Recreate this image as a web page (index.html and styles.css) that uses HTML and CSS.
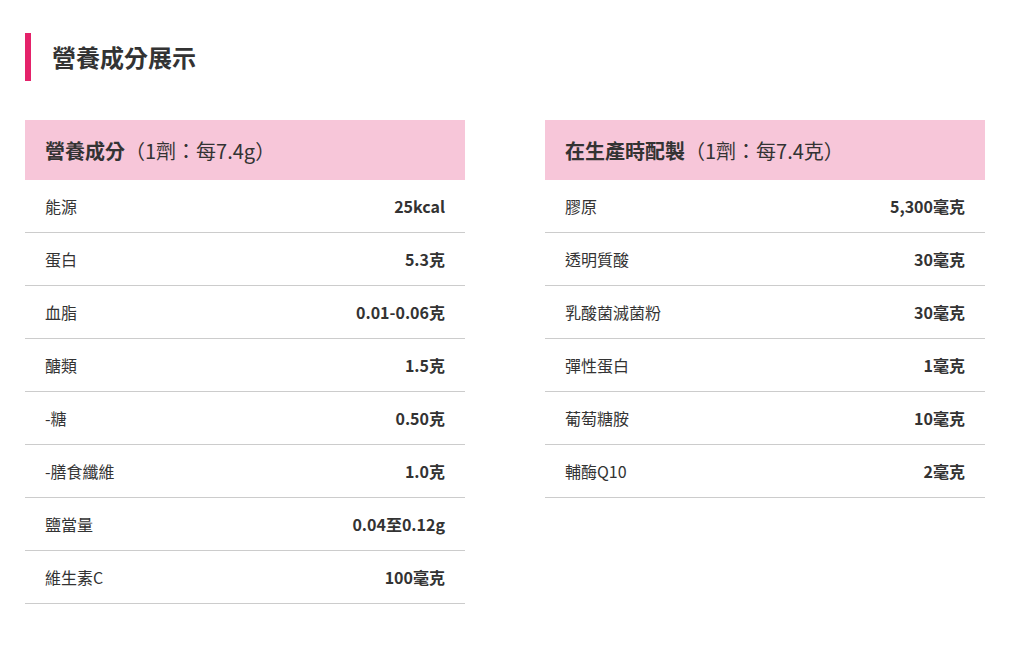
FILE: index.html
```html
<!DOCTYPE html>
<html lang="zh-Hant">
<head>
<meta charset="utf-8">
<link rel="stylesheet" href="styles.css">
</head>
<body>
<div class="page">
  <h2 class="title">營養成分展示</h2>
  <div class="tables">
    <div class="table">
      <div class="thead"><strong>營養成分</strong>（1劑：每7.4g）</div>
      <div class="row"><span>能源</span><b>25kcal</b></div>
      <div class="row"><span>蛋白</span><b>5.3克</b></div>
      <div class="row"><span>血脂</span><b>0.01-0.06克</b></div>
      <div class="row"><span>醣類</span><b>1.5克</b></div>
      <div class="row"><span>-糖</span><b>0.50克</b></div>
      <div class="row"><span>-膳食纖維</span><b>1.0克</b></div>
      <div class="row"><span>鹽當量</span><b>0.04至0.12g</b></div>
      <div class="row"><span>維生素C</span><b>100毫克</b></div>
    </div>
    <div class="table">
      <div class="thead"><strong>在生產時配製</strong>（1劑：每7.4克）</div>
      <div class="row"><span>膠原</span><b>5,300毫克</b></div>
      <div class="row"><span>透明質酸</span><b>30毫克</b></div>
      <div class="row"><span>乳酸菌滅菌粉</span><b>30毫克</b></div>
      <div class="row"><span>彈性蛋白</span><b>1毫克</b></div>
      <div class="row"><span>葡萄糖胺</span><b>10毫克</b></div>
      <div class="row"><span>輔酶Q10</span><b>2毫克</b></div>
    </div>
  </div>
</div>
</body>
</html>
```
FILE: styles.css
```css
* { box-sizing: border-box; }
body {
  margin: 0;
  background: #fff;
  color: #333;
  font-family: "Noto Sans CJK TC", "Noto Sans", sans-serif;
}
.page {
  padding: 33px 30px 0 25px;
  width: 1010px;
}
.title {
  margin: 0;
  height: 48px;
  border-left: 6px solid #e4226a;
  padding-left: 21px;
  font-size: 24px;
  font-weight: 700;
  line-height: 48px;
  color: #333;
}
.tables {
  margin-top: 39px;
  display: grid;
  grid-template-columns: 440px 440px;
  column-gap: 80px;
  align-items: start;
}
.thead {
  height: 60px;
  background: #f7c6d9;
  padding: 0 20px;
  display: flex;
  align-items: center;
  font-size: 20px;
  font-weight: 400;
  color: #333;
}
.thead strong { font-weight: 700; }
.row {
  height: 53px;
  border-bottom: 1px solid #ccc;
  padding: 0 20px;
  display: flex;
  justify-content: space-between;
  align-items: center;
  font-size: 16px;
}
.row b { font-weight: 700; }
```
